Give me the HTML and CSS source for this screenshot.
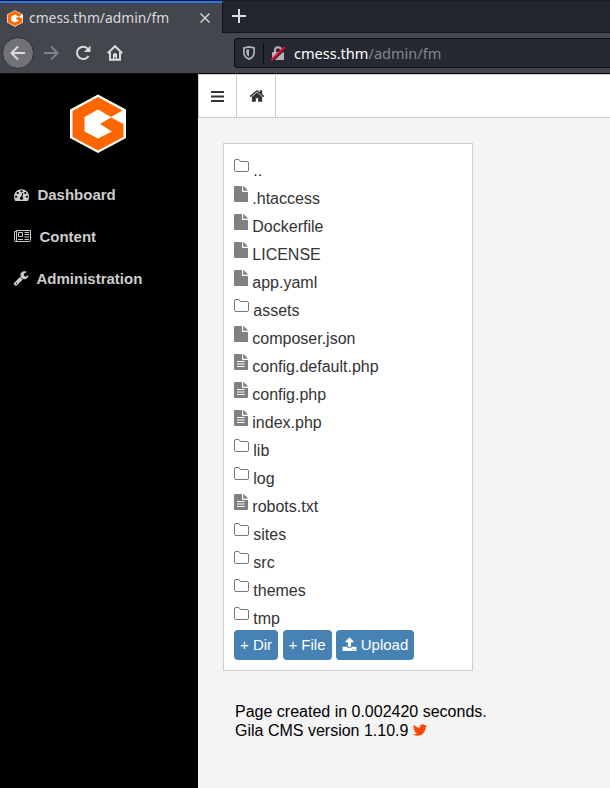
FILE: index.html
```html
<!DOCTYPE html>
<html lang="en">
<head>
<meta charset="utf-8">
<title>cmess.thm/admin/fm</title>
<link rel="stylesheet" href="styles.css">
</head>
<body>
<svg width="0" height="0" class="sprite" aria-hidden="true">
  <symbol id="logo" viewBox="0 0 56 60">
    <path fill="#fff" d="M28 0.5 56 15.5V44L28 59 0 44V15.5z"/>
    <path fill="#f60" d="M28 3 52.5 16.5 41 23 28 15.5 14.500 23V37.500L28 44.500 42 37.500 30 30 41 23.500 53.500 30V43L28 56.500 2.500 43V17z"/>
  </symbol>
  <symbol id="folder" viewBox="0 0 15 13"><path fill="none" stroke="#777" d="M.5 2Q.5.5 2 .5H4.500Q5.800.5 5.800 2 5.800 2.500 7 2.500H13Q14.500 2.500 14.500 4V11Q14.500 12.500 13 12.500H2Q.5 12.500.5 11z"/></symbol>
  <symbol id="file" viewBox="0 0 14 16"><path fill="#808080" d="M0 .8Q0 0 .8 0H8V5.200Q8 6 8.800 6H14V15.200Q14 16 13.200 16H.8Q0 16 0 15.200zM9.200 0Q10 .3 10.500.8L13 3.500Q13.700 4.200 13.800 4.800H9.200z"/></symbol>
  <symbol id="text" viewBox="0 0 14 16"><use href="#file"/><path stroke="#fff" d="M3 7.500H10.500M3 10H10.500M3 12.500H10.500"/></symbol>
</svg>
<header class="browser">
  <div class="tabs">
    <div class="tab"><svg class="favicon" viewBox="0 0 56 60"><use href="#logo"/></svg><span class="title">cmess.thm/admin/fm</span>
      <svg class="close" viewBox="0 0 10 10"><path d="M.5.5 9.500 9.500M9.500.5.5 9.500"/></svg></div>
    <svg class="plus" viewBox="0 0 14 14"><path d="M7 0V14M0 7H14"/></svg>
  </div>
  <div class="toolbar">
    <div class="back"><svg class="nav" viewBox="0 0 16 16"><path d="M15 8H1.500M8 1.500 1.500 8 8 14.500"/></svg></div>
    <svg class="nav forward" viewBox="0 0 16 16"><path d="M1 8H14.500M8 1.500 14.500 8 8 14.500"/></svg>
    <svg class="nav reload" viewBox="0 0 16 16"><path d="M13 4A6.200 6.200 0 1 0 13.500 11"/><path class="solid" d="M15.500.5V7H9z"/></svg>
    <svg class="nav home" viewBox="0 0 16 16"><path d="M.7 8.300 8 1.200 15.300 8.300M3 7V14.800H13V7"/><path class="solid" d="M6 15V9.500Q6 8 8 8T10 9.500V15H8.800V12H7.500V15z"/></svg>
    <div class="address">
      <svg class="shield" viewBox="0 0 12 14"><path fill="none" stroke="#b4b5b9" stroke-width="1.700" d="M6 .9 11.100 2V6.500Q11.100 11 6 13.100.9 11 .9 6.500V2z"/><path fill="#b4b5b9" d="M6 3.200V10.800Q3.300 9.500 3.300 6.500V3.700z"/></svg>
      <svg class="lock" viewBox="0 0 14 15"><path fill="none" stroke="#b4b5b9" stroke-width="2" d="M4 7V4Q4 1.200 7 1.200T10 4V7"/><rect x="1" y="6" width="12" height="8" rx="1" fill="#b4b5b9"/><path stroke="#262833" stroke-width="2" d="M1.500 15 14 2.500"/><path stroke="#ff0039" stroke-width="2" d="M.5 14 13.500 1"/></svg>
      <span class="url">cmess.thm<i>/admin/fm</i></span>
    </div>
  </div>
</header>
<div class="page">
  <aside class="sidebar">
    <svg class="logo" viewBox="0 0 56 60"><use href="#logo"/></svg>
    <a class="item"><svg class="fa" viewBox="0 0 1792 1792"><path d="M384 1152q0-53-37.500-90.500t-90.500-37.500-90.500 37.500-37.500 90.500 37.500 90.500 90.500 37.500 90.500-37.500 37.500-90.500zm192-448q0-53-37.500-90.500t-90.500-37.500-90.500 37.500-37.500 90.500 37.500 90.500 90.500 37.500 90.500-37.500 37.500-90.500zm428 481l101-382q6-26-7.500-48.500t-38.500-29.500-48 6.500-30 39.500l-101 382q-60 5-107 43.500t-63 98.500q-20 77 20 146t117 89 146-20 89-117q16-60-6-117t-72-91zm660-33q0-53-37.500-90.500t-90.500-37.500-90.500 37.500-37.500 90.500 37.500 90.500 90.500 37.500 90.500-37.500 37.500-90.500zm-640-640q0-53-37.500-90.500t-90.500-37.500-90.500 37.500-37.500 90.500 37.500 90.500 90.500 37.500 90.500-37.500 37.500-90.500zm448 192q0-53-37.500-90.500t-90.500-37.500-90.500 37.500-37.500 90.500 37.500 90.500 90.500 37.500 90.500-37.500 37.500-90.500zm320 448q0 261-141 483-19 29-54 29h-1402q-35 0-54-29-141-221-141-483 0-182 71-348t191-286 286-191 348-71 348 71 286 191 191 286 71 348z"/></svg>Dashboard</a>
    <a class="item"><svg class="news" viewBox="0 0 17 12"><path fill="none" stroke="currentColor" d="M2.500.5H16.500V10.500Q16.500 11.500 15.500 11.500H1.500Q.5 11.500.5 10.500V1.500H2.500M2.500.5V10Q2.500 11.500 1.500 11.500M4.500 2.500H8.500V6.500H4.500zM4 9.500H9M10.500 2.500H15M10.500 4.500H15M10.500 7H15M10.500 9.500H15"/></svg>Content</a>
    <a class="item"><svg class="fa wrench" viewBox="0 0 1792 1792"><path d="M448 1472q0-26-19-45t-45-19-45 19-19 45 19 45 45 19 45-19 19-45zm644-420l-682 682q-37 37-90 37-52 0-91-37l-106-108q-38-36-38-90 0-53 38-91l681-681q39 98 114.500 173.500t173.500 114.500zm634-435q0 39-23 106-47 134-164.500 217.500t-258.500 83.500q-185 0-316.500-131.500t-131.500-316.500 131.500-316.500 316.500-131.500q58 0 121.500 16.500t107.500 46.500q16 11 16 28t-16 28l-293 169v224l193 107q5-3 79-48.500t135.500-81 70.500-35.500q15 0 23.500 10t8.500 25z"/></svg>Administration</a>
  </aside>
  <main class="main">
    <nav class="topnav">
      <a class="cell"><svg class="bars" viewBox="0 0 13 11"><path d="M0 1H13M0 5.500H13M0 10H13"/></svg></a>
      <a class="cell"><svg class="fa house" viewBox="0 0 1792 1792"><path d="M1472 992v480q0 26-19 45t-45 19h-384v-384h-256v384h-384q-26 0-45-19t-19-45v-480q0-1 .5-3t.5-3l575-474 575 474q1 2 1 6zm223-69l-62 74q-8 9-21 11h-3q-13 0-21-7l-692-577-692 577q-12 8-24 7-13-2-21-11l-62-74q-8-10-7-23.500t11-21.500l719-599q32-26 76-26t76 26l244 204v-195q0-14 9-23t23-9h192q14 0 23 9t9 23v408l219 182q10 8 11 21.500t-7 23.500z"/></svg></a>
    </nav>
    <section class="panel">
      <ul class="files">
        <li><svg class="dir"><use href="#folder"/></svg>..</li>
        <li><svg class="doc"><use href="#file"/></svg>.htaccess</li>
        <li><svg class="doc"><use href="#file"/></svg>Dockerfile</li>
        <li><svg class="doc"><use href="#file"/></svg>LICENSE</li>
        <li><svg class="doc"><use href="#file"/></svg>app.yaml</li>
        <li><svg class="dir"><use href="#folder"/></svg>assets</li>
        <li><svg class="doc"><use href="#file"/></svg>composer.json</li>
        <li><svg class="doc"><use href="#text"/></svg>config.default.php</li>
        <li><svg class="doc"><use href="#text"/></svg>config.php</li>
        <li><svg class="doc"><use href="#text"/></svg>index.php</li>
        <li><svg class="dir"><use href="#folder"/></svg>lib</li>
        <li><svg class="dir"><use href="#folder"/></svg>log</li>
        <li><svg class="doc"><use href="#text"/></svg>robots.txt</li>
        <li><svg class="dir"><use href="#folder"/></svg>sites</li>
        <li><svg class="dir"><use href="#folder"/></svg>src</li>
        <li><svg class="dir"><use href="#folder"/></svg>themes</li>
        <li><svg class="dir"><use href="#folder"/></svg>tmp</li>
      </ul>
      <div class="actions">
        <a class="btn dir-btn">+ Dir</a><a class="btn file-btn">+ File</a><a class="btn upload-btn"><svg class="fa" viewBox="0 0 1792 1792"><path d="M1344 1472q0-26-19-45t-45-19-45 19-19 45 19 45 45 19 45-19 19-45zm256 0q0-26-19-45t-45-19-45 19-19 45 19 45 45 19 45-19 19-45zm128-224v320q0 40-28 68t-68 28h-1472q-40 0-68-28t-28-68v-320q0-40 28-68t68-28h427q21 56 70.500 92t110.500 36h256q61 0 110.500-36t70.500-92h427q40 0 68 28t28 68zm-325-648q-17 40-59 40h-256v448q0 26-19 45t-45 19h-256q-26 0-45-19t-19-45v-448h-256q-42 0-59-40-17-39 14-69l448-448q18-19 45-19t45 19l448 448q31 30 14 69z"/></svg>Upload</a>
      </div>
    </section>
    <footer class="footer">
      <div>Page created in 0.002420 seconds.</div>
      <div>Gila CMS version 1.10.9 <svg class="fa bird" viewBox="0 0 1792 1792"><path d="M1684 408q-67 98-162 167 1 14 1 42 0 130-38 259.500t-115.500 248.500-184.500 210.500-258 146-323 54.500q-271 0-496-145 35 4 78 4 225 0 401-138-105-2-188-64.500t-114-159.500q33 5 61 5 43 0 85-11-112-23-185.500-111.500t-73.500-205.500v-4q68 38 146 41-66-44-105-115t-39-154q0-88 44-163 121 149 294.500 238.500t371.500 99.500q-8-38-8-74 0-134 94.500-228.500t228.500-94.500q140 0 236 102 109-21 205-78-37 115-142 178 93-10 186-50z"/></svg></div>
    </footer>
  </main>
</div>
</body>
</html>
```
FILE: styles.css
```css
* { box-sizing: border-box; }
body { margin: 0; height: 788px; overflow: hidden; font: 16px "Liberation Sans", Arial, sans-serif; background: #f4f4f4; }
svg { display: block; flex: none; }
.sprite { position: absolute; }
.browser { height: 74px; background: #43464d; border-bottom: 1px solid #0c0d12; border-top: 1px solid #1b1c23; font-family: "Noto Sans", sans-serif; }
.tabs { display: flex; height: 32px; background: #23252e; border-bottom: 1px solid #15161c; }
.tab { display: flex; align-items: center; width: 223px; height: 32px; padding: 0 12px 0 7px; background: #43464d; border-top: 2px solid #2a74ee; border-right: 1px solid #15161c; font-size: 14px; color: #d8d9dc; }
.title { font-size: 13.850px; padding-bottom: 2px; }
.favicon { width: 16px; height: 17px; margin-right: 6px; }
.close { width: 10px; height: 10px; margin-left: auto; fill: none; stroke: #d0d1d4; stroke-width: 1.5; }
.plus { width: 14px; height: 14px; margin: 8px 0 0 9px; fill: none; stroke: #dcdcde; stroke-width: 2; }
.toolbar { display: flex; align-items: center; height: 40px; padding-left: 2px; }
.back { display: flex; align-items: center; justify-content: center; width: 32px; height: 32px; border-radius: 50%; background: #707278; border: 1px solid #2c2e35; }
.nav { width: 16px; height: 16px; fill: none; stroke: #dcdcde; stroke-width: 2; }
.nav .solid { fill: #dcdcde; stroke: none; }
.forward { margin-left: 9px; stroke: #7f8186; }
.reload { margin-left: 16px; }
.home { margin-left: 16px; }
.address { display: flex; align-items: center; flex: 1; height: 30px; margin-left: 111px; background: #262833; border: 1px solid #0e0f14; border-right: 0; border-radius: 4px 0 0 4px; }
.shield { width: 12px; height: 14px; margin: 0 8px; }
.lock { width: 14px; height: 15px; margin-right: 9px; }
.lock { box-sizing: content-box; padding: 3px 0 3px 7px; border-left: 1px solid #0c0d12; }
.url { font-size: 14.550px; color: #fff; }
.url i { font-style: normal; color: #85878d; }
.page { display: flex; height: 714px; }
.sidebar { width: 198px; background: #000; padding-top: 20px; }
.logo { width: 58px; height: 60px; margin: 0 auto 19px 69px; }
.item { display: flex; align-items: center; height: 42px; padding-left: 14px; color: #ccc; font-size: 15px; font-weight: bold; }
.fa { width: 15px; height: 15px; fill: currentColor; }
.item .fa { margin-right: 8.400px; }
.item .wrench { width: 16px; height: 16px; margin-left: -1px; margin-right: 7.500px; }
.news { width: 17px; height: 12px; margin-right: 8.400px; }
.main { flex: 1; background: #f4f4f4; }
.topnav { display: flex; height: 44px; background: #fff; border: solid #ccc; border-width: 1px 0 1px 1px; color: #333; }
.cell { display: flex; align-items: center; justify-content: center; width: 39px; border-right: 1px solid #ccc; }
.cell:first-child { width: 38px; }
.house { width: 16px; height: 16px; margin-top: -1px; margin-right: -1px; }
.bars { width: 13px; height: 11px; stroke: #333; stroke-width: 2; }
.panel { width: 250px; height: 528px; margin: 25px 0 0 25px; padding: 13px 10px 0; background: #fff; border: 1px solid #ccc; }
.files { margin: 0; padding: 0; list-style: none; color: #333; }
.files li { display: flex; height: 28px; line-height: 28px; }
.dir { width: 15px; height: 13px; margin: 2px 4.300px 0 0; }
.doc { width: 14px; height: 16px; margin: 1px 4.300px 0 0; }
.actions { display: flex; margin-top: -3px; }
.btn { display: flex; align-items: center; justify-content: center; height: 30px; padding-bottom: 2px; border-radius: 4px; background: #4682b4; color: #fff; font-size: 15px; }
.dir-btn { width: 44px; margin-right: 5px; }
.file-btn { width: 49px; margin-right: 4px; padding-right: 1px; }
.upload-btn { width: 78px; }
.upload-btn .fa { margin-right: 4px; }
.footer { margin: 31px 0 0 37px; line-height: 19px; color: #000; }
.bird { display: inline-block; width: 16px; height: 16px; vertical-align: -2px; margin-left: -1px; color: #ff4500; }
```
